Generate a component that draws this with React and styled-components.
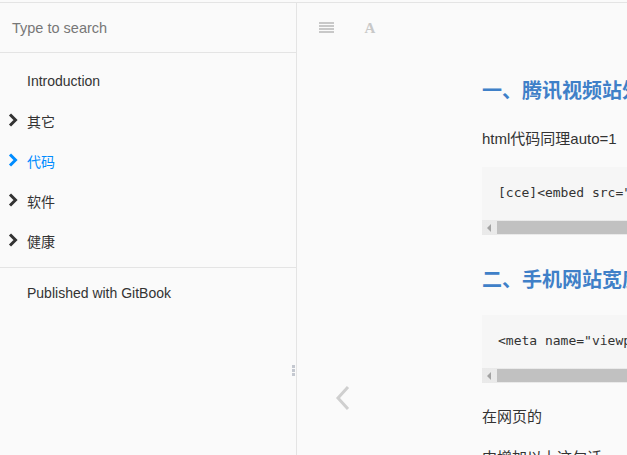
import styled, { createGlobalStyle } from "styled-components";

const GlobalStyle = createGlobalStyle`
  html, body {
    margin: 0;
    padding: 0;
    background: #fafafa;
    overflow: hidden;
  }
  body {
    font-family: "Liberation Sans", "Noto Sans CJK SC", sans-serif;
    color: #333;
  }
`;

const navItems = [
  { label: "Introduction", arrow: false },
  { label: "其它", arrow: true },
  { label: "代码", arrow: true, active: true },
  { label: "软件", arrow: true },
  { label: "健康", arrow: true },
];

function Chevron({ color }) {
  return (
    <svg width="10" height="14" viewBox="0 0 10 14">
      <polyline
        points="2,1.5 7.5,7 2,12.5"
        fill="none"
        stroke={color}
        strokeWidth="3"
      />
    </svg>
  );
}

function MenuIcon() {
  return (
    <svg width="15" height="12" viewBox="0 0 15 12">
      {[1, 4, 7, 10].map((y) => (
        <rect key={y} x="0" y={y - 1} width="15" height="2" fill="#c8c8c8" />
      ))}
    </svg>
  );
}

function BackArrow() {
  return (
    <svg width="18" height="28" viewBox="0 0 18 28">
      <polyline
        points="14,3 4,14 14,25"
        fill="none"
        stroke="#cfcfcf"
        strokeWidth="3"
      />
    </svg>
  );
}

export default function App() {
  return (
    <>
      <GlobalStyle />
      <Frame>
        <Sidebar>
          <Search>Type to search</Search>
          <Nav>
            {navItems.map((item) => (
              <NavItem key={item.label} $active={item.active}>
                <ArrowSlot>
                  {item.arrow && (
                    <Chevron color={item.active ? "#008cff" : "#333"} />
                  )}
                </ArrowSlot>
                {item.label}
              </NavItem>
            ))}
          </Nav>
          <Footer>
            <NavItem>
              <ArrowSlot />
              Published with GitBook
            </NavItem>
          </Footer>
          <Handle>
            <span />
            <span />
            <span />
          </Handle>
        </Sidebar>
        <Main>
          <Toolbar>
            <ToolButton>
              <MenuIcon />
            </ToolButton>
            <ToolButton $font>A</ToolButton>
          </Toolbar>
          <Body>
            <PrevLink>
              <BackArrow />
            </PrevLink>
            <Article>
              <Heading>一、腾讯视频站外嵌入自动播放</Heading>
              <Para>html代码同理auto=1</Para>
              <CodeBlock>
                <CodeLine>
                  [cce]&lt;embed src="https://imgcache.qq.com/tencentvideo_v1/playerv3/TPout.swf?max_age=86400&amp;v=20161117&amp;auto=1"
                </CodeLine>
                <ScrollBar>
                  <ScrollArrow />
                  <ScrollThumb />
                </ScrollBar>
              </CodeBlock>
              <Heading>二、手机网站宽度自适应</Heading>
              <CodeBlock>
                <CodeLine>
                  &lt;meta name="viewport" content="width=device-width, initial-scale=1.0, maximum-scale=1.0, user-scalable=0"&gt;
                </CodeLine>
                <ScrollBar>
                  <ScrollArrow />
                  <ScrollThumb />
                </ScrollBar>
              </CodeBlock>
              <Para>在网页的</Para>
              <Para>中增加以上这句话</Para>
            </Article>
          </Body>
        </Main>
      </Frame>
    </>
  );
}

const Frame = styled.div`
  display: flex;
  margin-top: 2px;
  border-top: 1px solid #e4e4e4;
  height: 452px;
  width: 627px;
  overflow: hidden;
`;

const Sidebar = styled.aside`
  position: relative;
  flex: 0 0 296px;
  border-right: 1px solid #e4e4e4;
  background: #fafafa;
  display: flex;
  flex-direction: column;
`;

const Search = styled.div`
  height: 49px;
  border-bottom: 1px solid #e4e4e4;
  display: flex;
  align-items: center;
  padding-left: 12px;
  font-size: 14.5px;
  color: #777;
`;

const Nav = styled.ul`
  list-style: none;
  margin: 0;
  padding: 8px 0 6px;
  border-bottom: 1px solid #e4e4e4;
`;

const NavItem = styled.li`
  list-style: none;
  height: 40px;
  display: flex;
  align-items: center;
  font-size: 14px;
  color: ${(p) => (p.$active ? "#008cff" : "#333")};
`;

const ArrowSlot = styled.span`
  width: 27px;
  padding-left: 8px;
  box-sizing: border-box;
  display: flex;
  align-items: center;
  margin-top: -2px;
`;

const Footer = styled.ul`
  margin: 0;
  padding: 5px 0 0;
`;

const Handle = styled.div`
  position: absolute;
  right: 1px;
  top: 362px;
  display: flex;
  flex-direction: column;
  gap: 1px;
  span {
    width: 3px;
    height: 3px;
    background: #c4c8d0;
  }
`;

const Main = styled.main`
  flex: 1;
  min-width: 0;
  display: flex;
  flex-direction: column;
`;

const Toolbar = styled.div`
  flex: 0 0 50px;
  display: flex;
  align-items: center;
  padding-left: 21px;
  gap: 28px;
`;

const ToolButton = styled.span`
  display: flex;
  align-items: center;
  justify-content: center;
  width: 16px;
  height: 16px;
  color: #c8c8c8;
  font-family: "Liberation Serif", serif;
  font-weight: bold;
  font-size: 15px;
  margin-top: ${(p) => (p.$font ? "1px" : "0")};
`;

const Body = styled.div`
  display: flex;
  flex-shrink: 0;
`;

const PrevLink = styled.div`
  flex: 0 0 185px;
  display: flex;
  align-items: flex-start;
  padding-left: 37px;
  padding-top: 331px;
  box-sizing: border-box;
`;

const Article = styled.article`
  width: 800px;
  flex: 0 0 800px;
  padding-top: 1px;
`;

const Heading = styled.h1`
  margin: 30px 0 20px;
  font-size: 20px;
  line-height: 30px;
  font-weight: bold;
  color: #3f80c8;
  white-space: nowrap;
  &:first-child {
    margin-top: 22px;
  }
`;

const Para = styled.p`
  margin: 0 0 15px;
  font-size: 15px;
  line-height: 26px;
  color: #333;
  white-space: nowrap;
`;

const CodeBlock = styled.div`
  background: #f6f6f6;
  padding-top: 16px;
  margin-bottom: 21px;
`;

const CodeLine = styled.div`
  padding-left: 16px;
  font-family: "DejaVu Sans Mono", monospace;
  font-size: 13px;
  line-height: 20px;
  color: #333;
  white-space: nowrap;
  margin-bottom: 17px;
`;

const ScrollBar = styled.div`
  height: 15px;
  display: flex;
  align-items: center;
  background-color: #f0f0f0;
  background-image: radial-gradient(#e2e2e2 0.6px, transparent 0.8px);
  background-size: 2px 2px;
`;

const ScrollArrow = styled.span`
  width: 0;
  height: 0;
  margin: 0 6px 0 5px;
  border-top: 4px solid transparent;
  border-bottom: 4px solid transparent;
  border-right: 4px solid #a3a3a3;
`;

const ScrollThumb = styled.span`
  flex: 1;
  height: 13px;
  background: #c1c1c1;
`;
